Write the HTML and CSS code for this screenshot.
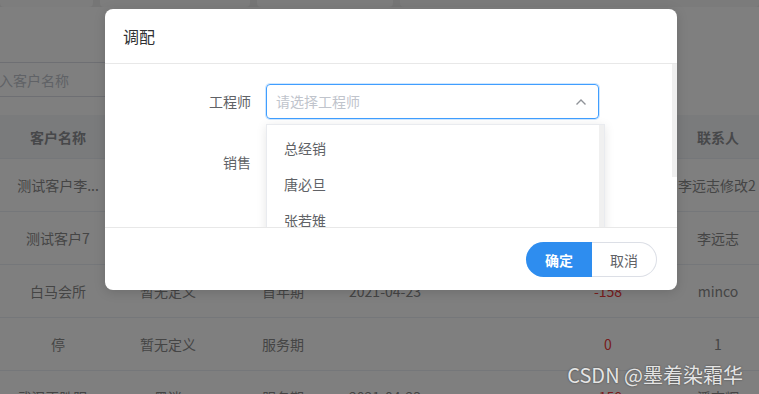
FILE: index.html
```html
<!DOCTYPE html>
<html lang="zh-CN">
<head>
    <meta charset="UTF-8">
    <meta name="viewport" content="width=device-width, initial-scale=1.0">
    <title>客户列表 - 调配</title>
    <link rel="stylesheet" href="styles.css">
</head>
<body>
    <div class="page">
        <div class="top-strip">
            <div class="card c1"></div>
            <div class="card c2"></div>
            <div class="card c3"></div>
            <div class="card c4"></div>
        </div>
        <div class="search">
            <input class="search-input" type="text" placeholder="请输入客户名称">
        </div>
        <div class="grid">
            <div class="row head">
                <div>客户名称</div><div>客户类型</div><div>阶段</div><div>到期时间</div><div>备注</div><div>剩余天数</div><div>联系人</div>
            </div>
            <div class="row">
                <div>测试客户李...</div><div>暂无定义</div><div>首年期</div><div>2021-04-23</div><div></div><div class="red">-158</div><div class="nowrap">李远志修改2</div>
            </div>
            <div class="row">
                <div>测试客户7</div><div>暂无定义</div><div>首年期</div><div>2021-04-23</div><div></div><div class="red">-158</div><div>李远志</div>
            </div>
            <div class="row">
                <div>白马会所</div><div>暂无定义</div><div>首年期</div><div>2021-04-23</div><div></div><div class="red">-158</div><div>minco</div>
            </div>
            <div class="row">
                <div>停</div><div>暂无定义</div><div>服务期</div><div></div><div></div><div class="red">0</div><div>1</div>
            </div>
            <div class="row">
                <div>武汉正胜阳...</div><div>黑迷</div><div>服务期</div><div>2021-04-23</div><div></div><div class="red">-158</div><div>潘志辉</div>
            </div>
        </div>
    </div>

    <div class="mask"></div>

    <div class="dialog">
        <div class="dialog-header">调配</div>
        <div class="dialog-body">
            <div class="form-item">
                <label class="form-label">工程师</label>
                <div class="select">
                    <span class="placeholder">请选择工程师</span>
                    <svg class="arrow" width="12" height="8" viewBox="0 0 12 8">
                        <path d="M1.5 6.5 L6 2 L10.5 6.5" fill="none" stroke="#909399" stroke-width="1.4"/>
                    </svg>
                </div>
            </div>
            <div class="form-item second">
                <label class="form-label">销售</label>
            </div>
            <div class="dropdown">
                <div class="option">总经销</div>
                <div class="option">唐必旦</div>
                <div class="option">张若雉</div>
                <div class="drop-thumb"></div>
            </div>
            <div class="body-thumb"></div>
        </div>
        <div class="dialog-footer">
            <div class="btn-group">
                <button class="btn primary">确定</button>
                <button class="btn plain">取消</button>
            </div>
        </div>
    </div>

    <div class="watermark">CSDN @墨着染霜华</div>
</body>
</html>
```

FILE: styles.css
```css
body {
    margin: 0;
    width: 759px;
    height: 394px;
    overflow: hidden;
    font-family: "Noto Sans CJK SC", "Noto Sans", sans-serif;
    font-size: 14px;
    background-color: #fff;
    position: relative;
}
.page {
    width: 759px;
    height: 394px;
    overflow: hidden;
}
.top-strip {
    display: flex;
    gap: 7px;
    height: 7px;
    background-color: #ececec;
}
.card {
    background-color: #fafafa;
    border-radius: 0 0 4px 4px;
}
.c1 { width: 93px; }
.c2 { width: 150px; }
.c3 { width: 136px; }
.c4 { flex: 1; background-color: #f6f6f6; }

.search {
    margin: 55px 0 18px -44px;
}
.search-input {
    width: 300px;
    height: 35px;
    box-sizing: border-box;
    border: 1px solid #dcdfe6;
    border-left: none;
    padding: 0 15px;
    font-family: inherit;
    font-size: 14px;
    outline: none;
}
.search-input::placeholder {
    color: #c0c4cc;
}

.row {
    display: grid;
    grid-template-columns: 116px 104px 126px 78px 115px 138px 82px;
    height: 53px;
    box-sizing: border-box;
    border-bottom: 1px solid #ebeef5;
    align-items: center;
    text-align: center;
    color: #8a8a8a;
}
.row > div {
    white-space: nowrap;
    overflow: hidden;
}
.row.head {
    height: 44px;
    background-color: #f5f6f8;
    color: #8e9094;
    font-weight: bold;
}
.row .nowrap {
    overflow: visible;
    text-align: left;
    padding-left: 1px;
}
.red {
    color: #f03a3a;
}

.mask {
    position: absolute;
    inset: 0;
    background-color: rgba(0, 0, 0, 0.5);
}

.dialog {
    position: absolute;
    left: 105px;
    top: 9px;
    width: 572px;
    background-color: #fff;
    border-radius: 8px;
    box-shadow: 0 2px 12px rgba(0, 0, 0, 0.15);
    overflow: hidden;
}
.dialog-header {
    height: 54px;
    line-height: 54px;
    padding-left: 18px;
    font-size: 16px;
    color: #303133;
    border-bottom: 1px solid #e8e8e8;
}
.dialog-body {
    position: relative;
    height: 163px;
    padding-top: 20px;
    box-sizing: border-box;
    overflow: hidden;
}
.form-item {
    display: flex;
    align-items: center;
    height: 35px;
}
.form-item.second {
    margin-top: 26px;
}
.form-label {
    width: 161px;
    box-sizing: border-box;
    padding-right: 15px;
    padding-bottom: 2px;
    text-align: right;
    color: #606266;
}
.select {
    width: 333px;
    height: 35px;
    box-sizing: border-box;
    border: 1px solid #409eff;
    border-radius: 4px;
    box-shadow: 0 0 0 1px rgba(64, 158, 255, 0.25);
    display: flex;
    align-items: center;
    justify-content: space-between;
    padding: 0 11px 2px 9px;
}
.placeholder {
    color: #c0c4cc;
}
.arrow {
    display: block;
    margin-top: 2px;
}

.dropdown {
    position: absolute;
    left: 161px;
    top: 60px;
    width: 339px;
    height: 200px;
    box-sizing: border-box;
    padding-top: 5px;
    background-color: #fff;
    border: 1px solid #e9ebef;
    box-shadow: 0 2px 10px rgba(0, 0, 0, 0.1);
}
.option {
    height: 36px;
    line-height: 36px;
    padding-left: 17px;
    color: #606266;
}
.drop-thumb {
    position: absolute;
    top: 0;
    right: 0;
    width: 5px;
    height: 100%;
    background-color: #f0f0f0;
}
.body-thumb {
    position: absolute;
    top: 0;
    right: 0;
    width: 5px;
    height: 113px;
    background-color: #efefef;
}

.dialog-footer {
    border-top: 1px solid #e8e8e8;
    padding: 14px 20px 13px;
    display: flex;
    justify-content: flex-end;
}
.btn-group {
    display: flex;
}
.btn {
    height: 35px;
    font-family: inherit;
    font-size: 14px;
    cursor: pointer;
    padding: 0;
}
.btn.primary {
    width: 66px;
    background-color: #2e8def;
    color: #fff;
    border: none;
    border-radius: 18px 0 0 18px;
    font-weight: bold;
}
.btn.plain {
    width: 65px;
    background-color: #fff;
    color: #606266;
    border: 1px solid #dcdfe6;
    border-left: none;
    border-radius: 0 18px 18px 0;
}

.watermark {
    position: absolute;
    right: 16px;
    top: 360px;
    font-size: 20px;
    color: #e4e4e4;
    text-shadow: 0 0 2px rgba(0, 0, 0, 0.5);
    font-family: "Noto Sans CJK SC", "DejaVu Sans", sans-serif;
}
```
